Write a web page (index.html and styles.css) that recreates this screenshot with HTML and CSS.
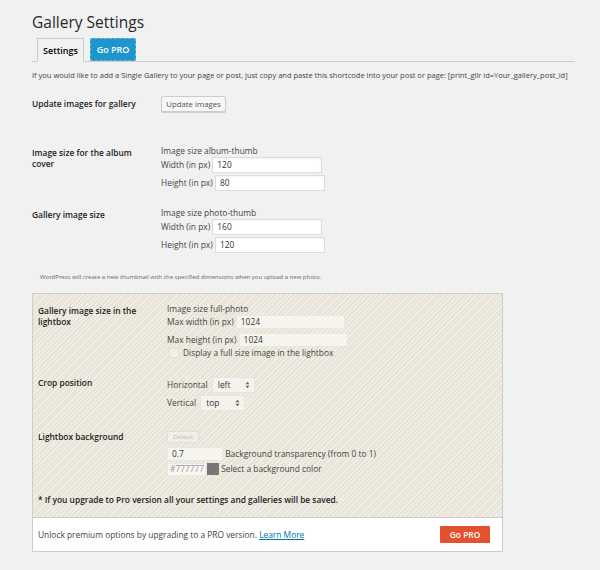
FILE: index.html
```html
<!DOCTYPE html>
<html>
<head>
<meta charset="utf-8">
<link rel="stylesheet" href="styles.css">
</head>
<body>
<div class="wrap">
  <h1 class="title">Gallery Settings</h1>
  <div class="tabs">
    <span class="tab active">Settings</span>
    <span class="tab pro">Go PRO</span>
  </div>
  <p class="desc">If you would like to add a Single Gallery to your page or post, just copy and paste this shortcode into your post or page: [print_gllr id=Your_gallery_post_id]</p>

  <div class="row r1">
    <div class="label">Update images for gallery</div>
    <div class="field"><span class="btn">Update images</span></div>
  </div>

  <div class="row r2">
    <div class="label">Image size for the album cover</div>
    <div class="field">
      <div class="line">Image size album-thumb</div>
      <div class="pair">Width (in px) <span class="input">120</span></div>
      <div class="pair">Height (in px) <span class="input">80</span></div>
    </div>
  </div>

  <div class="row r3">
    <div class="label">Gallery image size</div>
    <div class="field">
      <div class="line">Image size photo-thumb</div>
      <div class="pair">Width (in px) <span class="input">160</span></div>
      <div class="pair">Height (in px) <span class="input">120</span></div>
    </div>
  </div>

  <p class="note">WordPress will create a new thumbnail with the specified dimensions when you upload a new photo.</p>

  <div class="probox">
    <div class="stripes">
      <div class="row p1">
        <div class="label">Gallery image size in the lightbox</div>
        <div class="field">
          <div class="line">Image size full-photo</div>
          <div class="pair">Max width (in px) <span class="input pi">1024</span></div>
          <div class="pair">Max height (in px) <span class="input pi">1024</span></div>
          <div class="pair check"><span class="cb"></span>Display a full size image in the lightbox</div>
        </div>
      </div>

      <div class="row p2">
        <div class="label">Crop position</div>
        <div class="field">
          <div class="pair">Horizontal <span class="select s1">left<svg class="arr" width="5" height="8" viewBox="0 0 5 8"><path d="M0.5 3.2 L2.5 0.8 L4.5 3.2Z M0.5 4.8 L2.5 7.2 L4.5 4.8Z" fill="#666"/></svg></span></div>
          <div class="pair">Vertical <span class="select s2">top<svg class="arr" width="5" height="8" viewBox="0 0 5 8"><path d="M0.5 3.2 L2.5 0.8 L4.5 3.2Z M0.5 4.8 L2.5 7.2 L4.5 4.8Z" fill="#666"/></svg></span></div>
        </div>
      </div>

      <div class="row p3">
        <div class="label">Lightbox background</div>
        <div class="field">
          <span class="btn small">Default</span>
          <div class="pair"><span class="input pi trans">0.7</span> Background transparency (from 0 to 1)</div>
          <div class="pair"><span class="input pi color">#777777</span><span class="swatch"></span> Select a background color</div>
        </div>
      </div>

      <p class="pronote">* If you upgrade to Pro version all your settings and galleries will be saved.</p>
    </div>
    <div class="profoot">
      <span class="unlock">Unlock premium options by upgrading to a PRO version. <a class="learn">Learn More</a></span>
      <span class="gopro">Go PRO</span>
    </div>
  </div>
</div>
</body>
</html>
```

FILE: styles.css
```css
html, body {
  margin: 0;
  padding: 0;
  background: #f1f1f1;
}
body {
  font-family: "Open Sans", "DejaVu Sans", sans-serif;
  color: #444;
  font-size: 8.4px;
}
.wrap {
  padding: 0 25px 0 32px;
}
.title {
  margin: 0;
  padding-top: 12px;
  font-size: 15.5px;
  line-height: 20px;
  font-weight: 400;
  color: #23282d;
}
.tabs {
  margin-top: 6px;
  display: flex;
  gap: 6px;
  padding-left: 5px;
  border-bottom: 1px solid #ccc;
  height: 23px;
}
.tab {
  display: flex;
  align-items: center;
  justify-content: center;
  height: 22px;
  margin-bottom: -1px;
  font-weight: 600;
  font-size: 9px;
  box-sizing: border-box;
}
.tab.active {
  width: 47px;
  height: 24px;
  background: #f1f1f1;
  border: 1px solid #ccc;
  border-bottom: 1px solid #f1f1f1;
  color: #000;
}
.tab.pro {
  width: 46px;
  height: 23px;
  background: #1e96cd;
  color: #fff;
  border: 1px dashed #6fb9db;
}
.desc {
  margin: 0;
  padding-top: 7px;
  line-height: 12px;
  font-size: 7.5px;
  color: #444;
}
.row {
  display: grid;
  grid-template-columns: 129px 1fr;
}
.label {
  font-weight: 600;
  color: #222;
  line-height: 10.5px;
  padding-right: 20px;
}
.field {
  line-height: 12px;
}
.line {
  height: 12px;
}
.pair {
  display: flex;
  align-items: center;
  height: 16px;
  margin-top: 2px;
  white-space: pre;
}
.line + .pair {
  margin-top: 0;
}
.input {
  display: inline-flex;
  align-items: center;
  box-sizing: border-box;
  width: 110px;
  height: 16px;
  padding-left: 4px;
  background: #fff;
  border: 1px solid #ddd;
  box-shadow: inset 0 1px 2px rgba(0,0,0,0.05);
  color: #333;
}
.btn {
  display: inline-flex;
  align-items: center;
  justify-content: center;
  box-sizing: border-box;
  width: 65px;
  height: 16px;
  border: 1px solid #ccc;
  background: #f7f7f7;
  box-shadow: 0 1px 0 #ccc;
  border-radius: 2px;
  color: #555;
  font-size: 7.8px;
}
.r1 {
  margin-top: 15px;
  align-items: center;
}
.r1 .label { padding-top: 0; }
.r2 { margin-top: 33px; }
.r2 .label, .r3 .label { padding-top: 3px; }
.r3 { margin-top: 16px; }
.note {
  margin: 0;
  padding-top: 18px;
  padding-left: 8px;
  font-size: 6px;
  line-height: 12px;
  color: #666;
}
.probox {
  margin-top: 10px;
  width: 471px;
  border: 1px solid #ccc;
  box-sizing: border-box;
}
.stripes {
  background-color: #ece9df;
  background-image: repeating-linear-gradient(135deg, #f2f0e8 0px, #f2f0e8 1.2px, #e7e4d7 1.2px, #e7e4d7 3.2px);
  padding: 8px 5px 0 5px;
  height: 223px;
  box-sizing: border-box;
}
.probox .pair {
  height: 14px;
  margin-top: 4px;
}
.probox .line + .pair {
  margin-top: 0;
}
.probox .input.pi {
  width: 109px;
  height: 14px;
  background: rgba(255,255,255,0.5);
  border: 1px solid rgba(220,218,208,0.5);
  box-shadow: none;
}
.p1 .label { padding-top: 4px; }
.p1 .line { padding-top: 1px; }
.probox .pair.check { margin-top: 0; height: 12px; }
.cb {
  display: inline-block;
  width: 8px;
  height: 8px;
  margin: 0 4px 0 2px;
  border: 1px solid rgba(220,218,208,0.7);
  background: rgba(255,255,255,0.35);
}
.p2 { margin-top: 16px; }
.p2 .label { padding-top: 3px; }
.probox .p2 .pair { height: 16px; margin-top: 2px; }
.select {
  position: relative;
  display: inline-flex;
  align-items: center;
  box-sizing: border-box;
  height: 16px;
  padding-left: 5px;
  margin-left: 2px;
  background: rgba(255,255,255,0.45);
  border: 1px solid rgba(220,218,208,0.6);
  border-radius: 2px;
  color: #333;
}
.s1 { width: 43px; }
.s2 { width: 45px; }
.arr {
  position: absolute;
  right: 4px;
  top: 3px;
}
.p3 { margin-top: 19px; }
.p3 .label { padding-top: 2px; }
.btn.small {
  width: 32px;
  height: 12px;
  font-size: 6px;
  color: #bbb;
  background: rgba(255,255,255,0.3);
  border: 1px solid rgba(220,218,208,0.7);
  box-shadow: none;
  border-radius: 1px;
}
.probox .p3 .pair { margin-top: 4px; }
.probox .p3 .pair + .pair { margin-top: 1px; height: 14px; }
.probox .input.trans { width: 56px; color: #333; }
.probox .input.color {
  width: 39px;
  height: 13px;
  color: #999;
  padding-left: 2px;
  background: rgba(255,255,255,0.6);
}
.swatch {
  display: inline-block;
  width: 12px;
  height: 12px;
  background: #777;
  margin: 0 0 0 1px;
}
.pronote {
  margin: 0;
  padding-top: 18px;
  font-weight: 600;
  color: #222;
  line-height: 12px;
}
.profoot {
  display: flex;
  align-items: center;
  justify-content: space-between;
  height: 34px;
  background: #fff;
  border-top: 1px solid #ccc;
  padding: 0 12px 0 5px;
  box-sizing: border-box;
}
.unlock {
  font-size: 8.4px;
  color: #444;
}
.learn {
  color: #0073aa;
  text-decoration: underline;
}
.gopro {
  display: inline-flex;
  align-items: center;
  justify-content: center;
  width: 50px;
  height: 17px;
  background: #e2522f;
  color: #fff;
  font-weight: 600;
  font-size: 8.4px;
  border-radius: 1px;
}
```
